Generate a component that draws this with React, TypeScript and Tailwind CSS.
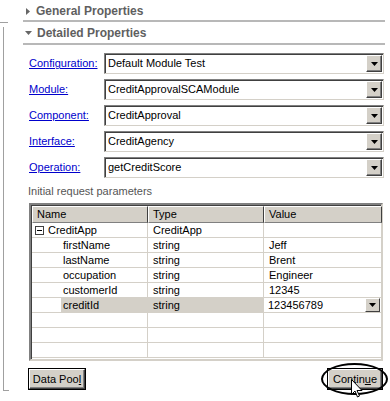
import React from 'react'

const font = { fontFamily: '"Liberation Sans", Arial, sans-serif' }

function Arrow() {
  return (
    <div className="flex h-[17px] w-[16px] items-center justify-center border border-t-white border-l-white border-r-[#404040] border-b-[#404040] bg-[#d4d0c8] shadow-[inset_-1px_-1px_0_#808080]">
      <svg width="7" height="4" viewBox="0 0 7 4">
        <path d="M0 0h7L3.5 4z" fill="#000" />
      </svg>
    </div>
  )
}

function Combo({ value }: { value: string }) {
  return (
    <div className="flex h-[21px] w-[280px] items-center border border-t-[#808080] border-l-[#808080] border-r-[#d4d0c8] border-b-[#d4d0c8] shadow-[inset_1px_1px_0_#404040]">
      <span className="flex-1 pl-[3px] text-[11px] text-black">{value}</span>
      <div className="mr-[1px]">
        <Arrow />
      </div>
    </div>
  )
}

const fields = [
  ['Configuration:', 'Default Module Test'],
  ['Module:', 'CreditApprovalSCAModule'],
  ['Component:', 'CreditApproval'],
  ['Interface:', 'CreditAgency'],
  ['Operation:', 'getCreditScore'],
]

const rows = [
  ['firstName', 'string', 'Jeff'],
  ['lastName', 'string', 'Brent'],
  ['occupation', 'string', 'Engineer'],
  ['customerId', 'string', '12345'],
]

const cell = 'h-[15px] border-r border-b border-[#d4d0c8] text-[11px] leading-[14px] text-black'

function Button({ children }: { children: React.ReactNode }) {
  return (
    <div className="border border-black">
      <div className="flex h-[20px] items-center justify-center border border-t-white border-l-white border-r-[#404040] border-b-[#404040] bg-[#d4d0c8] text-[11px] text-black shadow-[inset_-1px_-1px_0_#808080]">
        <span className="whitespace-nowrap">{children}</span>
      </div>
    </div>
  )
}

export default function App() {
  return (
    <div className="relative flex h-[401px] w-[390px] overflow-hidden bg-white" style={font}>
      <div className="w-[23px] shrink-0 pt-[22px]">
        <div className="h-px w-[8px] bg-[#a0a0a0]" />
        <div className="mt-[4px] ml-[3px] h-[364px] w-[6px] border-l border-b border-[#a0a0a0]" />
      </div>

      <div className="w-[362px] shrink-0">
        <div className="flex h-[22px] items-center gap-[6px] border-b-2 border-[#b8b8b8] pl-[3px] pt-[2px]">
          <svg width="4" height="7" viewBox="0 0 4 7">
            <path d="M0 0l4 3.5L0 7z" fill="#666" />
          </svg>
          <span className="text-[12px] font-bold text-[#5f5f5f]">General Properties</span>
        </div>
        <div className="flex h-[23px] items-center gap-[5px] border-b-2 border-[#b8b8b8] pl-[2px] pt-[1px]">
          <svg width="7" height="4" viewBox="0 0 7 4">
            <path d="M0 0h7L3.5 4z" fill="#666" />
          </svg>
          <span className="text-[12px] font-bold text-[#5f5f5f]">Detailed Properties</span>
        </div>

        <div className="mt-[8px] flex flex-col gap-[5px] pl-[6px]">
          {fields.map(([label, value]) => (
            <div key={label} className="flex items-center">
              <span className="w-[75px] text-[11px] text-[#0000cc] underline">{label}</span>
              <Combo value={value} />
            </div>
          ))}
        </div>

        <div className="mt-[7px] pl-[5px] text-[11px] leading-[13px] text-[#555]">Initial request parameters</div>

        <div className="mt-[5px] ml-[6px] w-[354px] border-2 border-t-[#808080] border-l-[#808080] border-r-[#d4d0c8] border-b-[#d4d0c8]">
          <div className="grid grid-cols-[116px_116px_118px] border-t border-l border-[#404040]">
            {['Name', 'Type', 'Value'].map((h) => (
              <div
                key={h}
                className="flex h-[17px] items-center border border-t-white border-l-white border-r-[#404040] border-b-[#808080] bg-[#d4d0c8] pl-[4px] text-[11px] text-black"
              >
                {h}
              </div>
            ))}

            <div className={`${cell} flex items-center`}>
              <div className="ml-[3px] flex h-[9px] w-[9px] items-center justify-center border border-[#404040]">
                <div className="h-px w-[5px] bg-black" />
              </div>
              <span className="ml-[4px]">CreditApp</span>
            </div>
            <div className={`${cell} pl-[5px]`}>CreditApp</div>
            <div className={cell} />

            {rows.map(([n, t, v]) => (
              <React.Fragment key={n}>
                <div className={`${cell} pl-[31px]`}>{n}</div>
                <div className={`${cell} pl-[5px]`}>{t}</div>
                <div className={`${cell} pl-[5px]`}>{v}</div>
              </React.Fragment>
            ))}

            <div className={`${cell} flex`}>
              <div className="w-[29px]" />
              <div className="flex-1 bg-[#d4d0c8] pl-[2px]">creditId</div>
            </div>
            <div className={`${cell} bg-[#d4d0c8] pl-[5px]`}>string</div>
            <div className={`${cell} flex items-center`}>
              <span className="flex-1 pl-[4px]">123456789</span>
              <div className="mr-[1px] flex h-[14px] w-[15px] items-center justify-center border border-t-white border-l-white border-r-[#404040] border-b-[#404040] bg-[#d4d0c8]">
                <svg width="7" height="4" viewBox="0 0 7 4">
                  <path d="M0 0h7L3.5 4z" fill="#000" />
                </svg>
              </div>
            </div>

            {[0, 1, 2].map((i) => (
              <React.Fragment key={i}>
                <div className={cell} />
                <div className={cell} />
                <div className={cell} />
              </React.Fragment>
            ))}
            <div className="h-[1px]" />
          </div>
        </div>

        <div className="mt-[7px] flex justify-between pl-[5px] pr-[2px]">
          <div className="w-[58px]">
            <Button>
              Data Poo<span className="underline">l</span>
            </Button>
          </div>
          <div className="w-[56px]">
            <Button>
              Contin<span className="underline">u</span>e
            </Button>
          </div>
        </div>
      </div>

      <div className="absolute left-[321px] top-[363px] h-[32px] w-[67px] rounded-[50%] border-2 border-black" />
      <svg className="absolute left-[351px] top-[379px]" width="12" height="19" viewBox="0 0 12 19">
        <path d="M0.5 0.5v15l3.5-3.5 2.5 6 2-1-2.5-5.5h5z" fill="#fff" stroke="#000" strokeWidth="1" />
      </svg>
    </div>
  )
}
